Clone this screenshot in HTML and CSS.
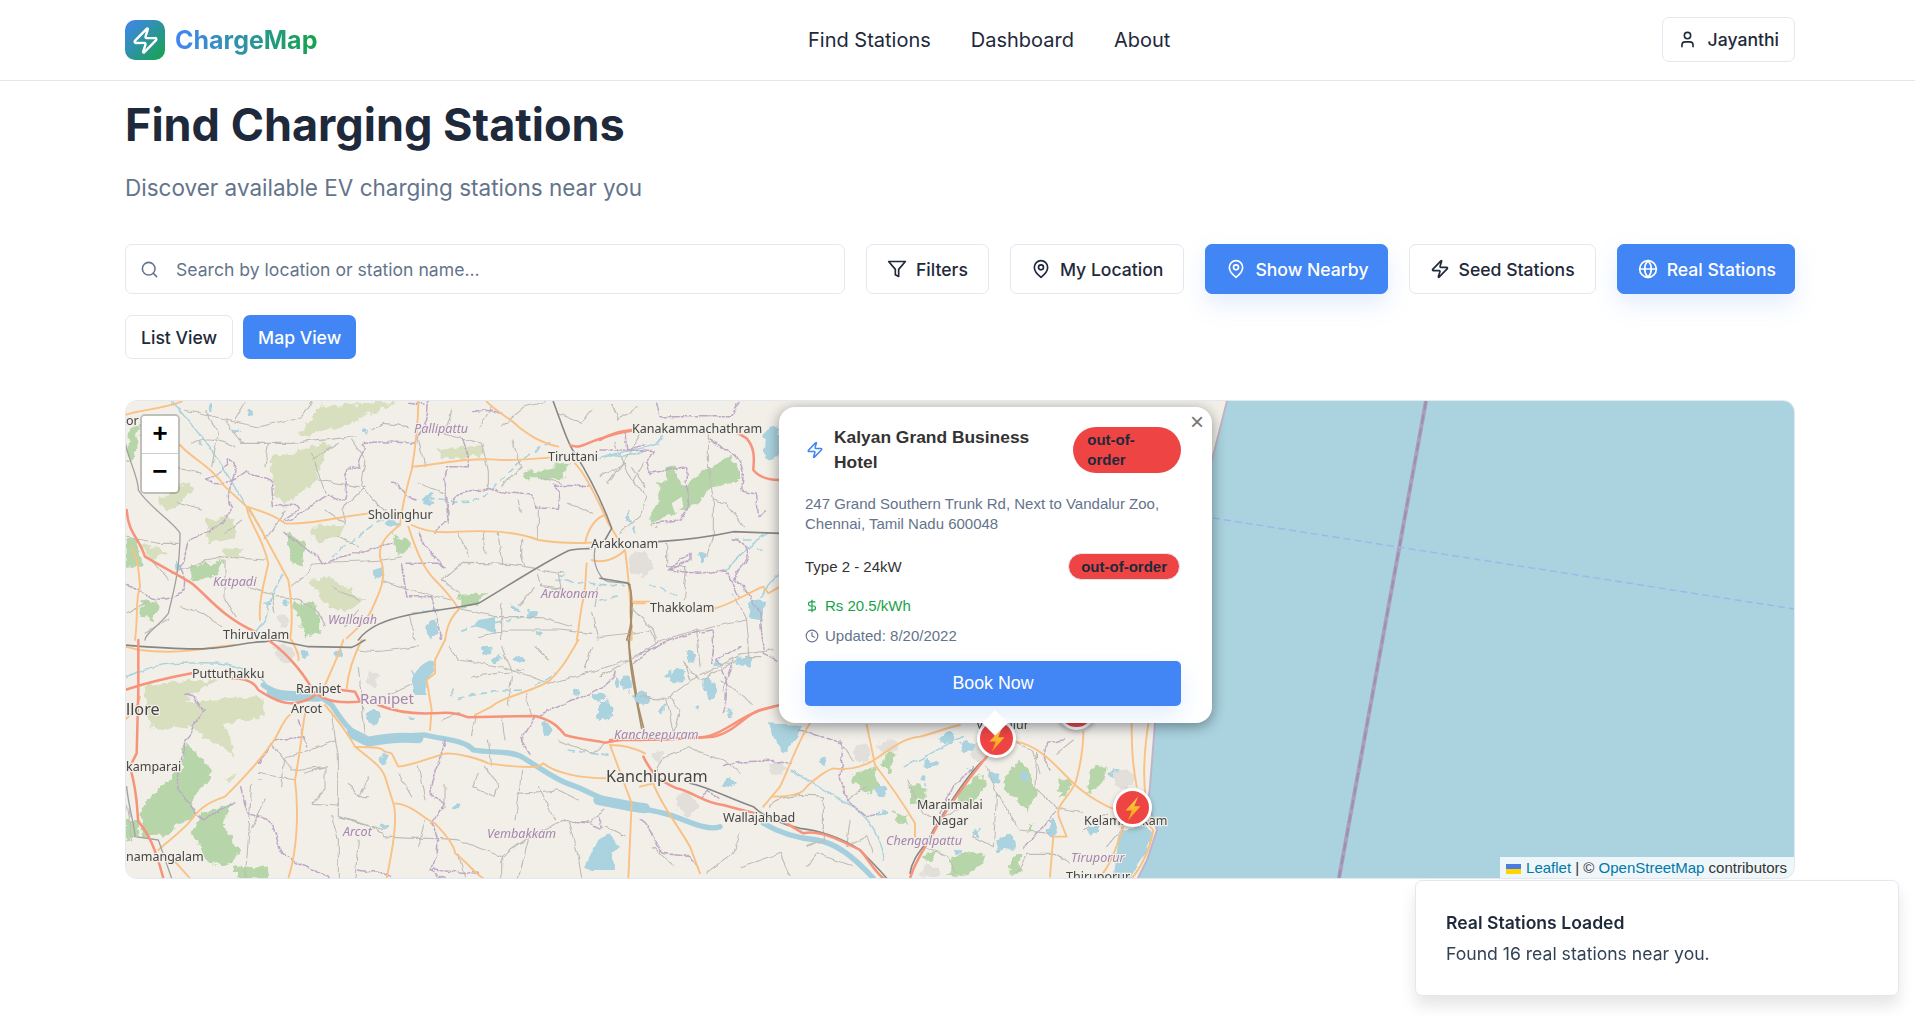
FILE: index.html
```html
<!DOCTYPE html>
<html lang="en">
<head>
<meta charset="utf-8">
<title>ChargeMap</title>
<link rel="stylesheet" href="styles.css">
</head>
<body>
<header class="topbar">
  <a class="brand">
    <span class="brand-mark"><svg class="ic ic-24" viewBox="0 0 24 24"><path d="M4 14a1 1 0 0 1-.78-1.63l9.9-10.2a.5.5 0 0 1 .86.46l-1.92 6.02A1 1 0 0 0 13 10h7a1 1 0 0 1 .78 1.63l-9.9 10.2a.5.5 0 0 1-.86-.46l1.92-6.02A1 1 0 0 0 11 14z"/></svg></span>
    <span class="brand-name">ChargeMap</span>
  </a>
  <nav class="nav"><a>Find Stations</a><a>Dashboard</a><a>About</a></nav>
  <button class="user-btn"><svg class="ic ic-19" viewBox="0 0 24 24"><path d="M19 21v-2a4 4 0 0 0-4-4H9a4 4 0 0 0-4 4v2"/><circle cx="12" cy="7" r="4"/></svg>Jayanthi</button>
</header>
<main class="page">
  <h1 class="title">Find Charging Stations</h1>
  <p class="subtitle">Discover available EV charging stations near you</p>
  <div class="toolbar">
    <label class="search"><svg class="ic ic-19" viewBox="0 0 24 24"><circle cx="11" cy="11" r="8"/><path d="m21 21-4.3-4.3"/></svg><span class="placeholder">Search by location or station name...</span></label>
    <button class="btn"><svg class="ic ic-20" viewBox="0 0 24 24"><polygon points="22 3 2 3 10 12.46 10 19 14 21 14 12.46 22 3"/></svg>Filters</button>
    <button class="btn"><svg class="ic ic-20" viewBox="0 0 24 24"><path d="M20 10c0 6-8 12-8 12s-8-6-8-12a8 8 0 0 1 16 0Z"/><circle cx="12" cy="10" r="3"/></svg>My Location</button>
    <button class="btn btn-primary"><svg class="ic ic-20" viewBox="0 0 24 24"><path d="M20 10c0 6-8 12-8 12s-8-6-8-12a8 8 0 0 1 16 0Z"/><circle cx="12" cy="10" r="3"/></svg>Show Nearby</button>
    <button class="btn"><svg class="ic ic-20" viewBox="0 0 24 24"><path d="M4 14a1 1 0 0 1-.78-1.63l9.9-10.2a.5.5 0 0 1 .86.46l-1.92 6.02A1 1 0 0 0 13 10h7a1 1 0 0 1 .78 1.63l-9.9 10.2a.5.5 0 0 1-.86-.46l1.92-6.02A1 1 0 0 0 11 14z"/></svg>Seed Stations</button>
    <button class="btn btn-primary"><svg class="ic ic-20" viewBox="0 0 24 24"><circle cx="12" cy="12" r="10"/><path d="M12 2a14.5 14.5 0 0 0 0 20 14.5 14.5 0 0 0 0-20"/><path d="M2 12h20"/></svg>Real Stations</button>
  </div>
  <div class="views">
    <button class="view">List View</button>
    <button class="view view-on">Map View</button>
  </div>
  <section class="map">
    <svg class="tiles" viewBox="126 401 1668 477" preserveAspectRatio="none">
      <defs>
        <filter id="rough" x="-10%" y="-10%" width="120%" height="120%"><feTurbulence type="fractalNoise" baseFrequency=".035" numOctaves="3" seed="4"/><feDisplacementMap in="SourceGraphic" scale="34" xChannelSelector="R" yChannelSelector="G"/></filter>
        <filter id="wiggle" x="-5%" y="-5%" width="110%" height="110%"><feTurbulence type="fractalNoise" baseFrequency=".03" numOctaves="2" seed="9"/><feDisplacementMap in="SourceGraphic" scale="16" xChannelSelector="R" yChannelSelector="G"/></filter>
        <linearGradient id="bolt" x1="0" y1="0" x2="0" y2="1"><stop offset="0" stop-color="#fcd34d"/><stop offset="1" stop-color="#f59e0b"/></linearGradient>
      </defs>
      <rect class="sea" x="126" y="401" width="1668" height="477"/>
      <path class="land" d="M126 401H1227L1212 460L1180 600L1155 723L1150 787L1148 803L1157 830L1147 860L1138 878H126Z"/>
      <path class="coast" d="M1227 401L1212 460L1180 600L1155 723L1150 787L1148 803L1157 830L1147 860L1138 878"/>
      <path class="eez" d="M1426 401L1339 878"/>
      <path class="eez-d" d="M1426 401L1339 878"/>
      <path class="maritime" d="M1213 518L1794 609"/>

      <!-- north-west sheet -->
      <g transform="translate(125 400) scale(.33333)">
        <path class="sc" d="M440 170L610 130 590 190 570 250 480 310 450 290Z M520 110L580 20 810 5 700 60 620 90Z M940 150L1070 135 1060 170 950 178Z M560 380L660 375 640 410 570 425Z M550 540L620 535 720 600 660 640 600 610Z M240 360L330 350 335 410 250 430Z M295 450L350 440 340 480 300 475Z M50 430L130 460 80 480Z M100 300L180 250 210 265 130 340Z"/>
        <path class="fo" d="M1190 225L1340 185 1310 235 1200 235Z M500 605L570 610 590 700 540 715 520 650Z M1000 585L1080 580 1060 615 1000 620Z M5 100L45 60 30 170 5 190Z M5 410L40 420 50 500 5 500Z M200 500L290 480 270 530 190 540Z M480 400L540 420 530 500 510 490Z M800 400L860 430 820 470Z M50 600L110 610 80 660 50 650Z"/>
        <path class="wa" d="M1060 660L1110 650 1110 700 1050 680Z M745 510L775 500 775 530 750 535Z"/>
        <path class="st" d="M140 5C200 70 280 170 340 280 380 340 400 370 420 410M475 520C450 570 430 600 425 650 410 680 400 690 390 700M1450 165C1500 175 1540 160 1560 150"/>
        <path class="dash" d="M620 470C680 420 730 390 780 350M910 290C960 300 1020 310 1050 300 1100 280 1130 240 1180 190 1210 170 1250 130 1290 125M860 640L940 630M1010 690C1060 670 1140 670 1220 640M1290 540L1500 560M1510 350L1530 400"/>
        <g class="blobs"><ellipse cx="800" cy="370" rx="20" ry="10"/><ellipse cx="912" cy="300" rx="8" ry="20"/><ellipse cx="920" cy="690" rx="15" ry="25"/><ellipse cx="258" cy="20" rx="8" ry="10"/><ellipse cx="370" cy="32" rx="8" ry="6"/><ellipse cx="720" cy="95" rx="12" ry="7"/><ellipse cx="335" cy="90" rx="8" ry="6"/><ellipse cx="1220" cy="645" rx="14" ry="12"/><ellipse cx="1170" cy="625" rx="10" ry="8"/><ellipse cx="1240" cy="700" rx="10" ry="8"/><ellipse cx="480" cy="610" rx="8" ry="12"/><ellipse cx="155" cy="495" rx="8" ry="10"/><ellipse cx="430" cy="610" rx="12" ry="6"/><ellipse cx="225" cy="130" rx="8" ry="5"/><ellipse cx="1505" cy="350" rx="5" ry="14"/><ellipse cx="1310" cy="525" rx="8" ry="4"/></g>
        <ellipse class="urban" cx="475" cy="660" rx="20" ry="22"/>
        <path class="mi" d="M180 30L300 60 400 80 530 50 560 5M300 60L350 130 500 130 690 110M200 130C250 100 300 130 330 140M680 120L720 180 710 260 780 330M740 90L780 70 850 80M880 85L1010 115 1070 130 1090 210 1090 260M1130 80L1200 20 1260 5M1300 40L1370 70 1400 30M560 490C620 480 760 490 830 470M560 490L550 520 500 560M420 420C450 380 470 340 480 330M1240 330L1240 420M1190 420L1190 470 1200 500 1320 520M1010 490C1080 490 1170 490 1200 500M1010 490L950 540 1000 580M1075 395L1080 460M770 540L850 570 980 600M1000 625L1110 650 1240 650 1340 680M1130 610L1130 720M1240 520L1250 560 1330 570M1300 520L1310 580M1450 250L1500 180 1550 100M1520 200L1560 260M140 520L200 500 280 470 420 480M0 410L100 430 160 430M300 480L300 600 330 650M170 620L230 640 290 680M0 640L60 610M450 590C520 590 590 620 600 680M1060 710L1150 690 1300 690 1400 700M1400 640L1420 720M850 650L870 720M240 30L280 100 260 200M430 130L420 200M560 160L600 280M720 260L650 330 660 370M580 240L700 260M360 10L330 60M640 130L560 180M1180 300L1190 340M1330 310L1400 340M1460 10L1480 60 1540 20M1470 130L1530 260M160 310L230 330M130 200L230 220M900 200L880 120M1100 20L1060 90M1160 120L1190 200 1130 260M960 100L980 30M1240 230L1310 250M880 250L960 280 970 370M1000 400L1030 470M1120 400L1130 490M1230 560L1180 620M1420 560L1410 620M620 560L700 600M700 630L660 680M370 560L440 580 450 640M70 470L130 540M60 700L130 660M350 360L300 400M640 410L700 440M600 330L660 370"/>
        <path class="bd" d="M0 555L40 570C90 610 130 600 170 580 190 540 170 520 165 500 190 480 170 430 210 410 270 390 310 370 320 320 290 280 340 230 330 185L310 180C300 210 270 230 245 240 280 260 340 240 365 215 400 240 430 220 440 250L445 320C500 315 520 310 520 330 500 350 470 355 480 365 530 350 560 310 610 285 640 300 665 320 665 280 660 240 650 210 680 200L705 205C690 170 725 160 720 140 700 130 740 120 870 130L905 60 910 5M850 10L900 15M970 210L955 240 965 290 970 360C940 370 935 400 930 400M980 310C990 270 1040 280 1090 265 1130 280 1180 280 1220 285L1230 325 1300 325 1305 280 1285 255 1395 260M830 495L845 590 920 590 945 690 950 720M840 490H940L960 500 900 440 880 400M480 400C520 440 570 450 590 490 650 470 720 450 800 430M1040 35C1080 30 1100 30 1130 40M1010 115L1030 170V200H960M1500 95L1505 150 1560 135M800 250C820 245 830 280 870 300"/>
        <path class="ro" d="M0 45C40 30 100 30 170 5M165 135C200 175 260 200 300 260L365 320C400 330 450 345 480 370 540 375 620 355 730 340M365 320C370 370 410 400 430 490 420 540 400 600 405 660M370 320L420 410 490 540C500 600 505 660 495 720M880 0C880 80 870 150 860 210 840 280 830 330 825 375M865 200C930 195 1000 175 1100 178 1170 185 1230 175 1280 172M1085 5C1120 40 1150 50 1180 80 1220 110 1250 130 1300 140M1350 190C1380 220 1410 280 1450 370L1500 450C1510 520 1520 640 1520 720M1380 430C1390 380 1420 345 1445 345M825 375C790 400 760 430 765 470 790 540 760 580 740 630 720 670 690 690 665 715M850 380C870 440 890 500 930 540 970 580 1000 620 1000 630 970 660 965 690 960 720M860 375C900 395 950 400 1000 395 1100 390 1180 395 1240 420 1300 430 1350 430 1400 428M1400 480C1430 490 1470 480 1500 450M1385 490C1380 540 1385 560 1370 620 1360 680 1360 700 1355 720M1520 610H1560M30 720C40 650 30 600 45 560 40 490 35 470 20 440"/>
        <path class="rl-l" d="M0 125C10 180 40 230 40 270 70 320 150 370 165 400 165 500 150 560 130 640 100 680 60 700 60 720M1410 445C1400 500 1430 540 1450 545L1510 550"/>
        <path class="rl" d="M700 720C730 680 780 660 850 645 920 630 1000 625 1060 610 1130 570 1250 490 1330 452 1350 445 1380 447 1400 445M1285 5C1310 70 1330 140 1350 160 1400 240 1440 330 1460 385L1440 420"/>
        <path class="rb" d="M1510 550C1530 600 1520 680 1505 720"/>
        <path class="tr" d="M5 330C10 400 40 410 60 470 110 500 170 530 200 550 250 590 290 650 390 695M1335 135C1365 150 1390 125 1430 115 1470 100 1500 95 1520 92"/>
      </g>

      <!-- south-west sheet -->
      <g transform="translate(125 640) scale(.33333)">
        <path class="sc" d="M60 140L190 120 270 120 180 180 240 180 420 170 410 230 300 250 330 350 260 300 200 260 90 270 60 200Z M300 410L340 400 310 430Z"/>
        <path class="fo" d="M180 310L240 370 260 410 200 470 210 520 120 590 50 590 50 500 110 440 170 380Z M230 520L320 490 290 560 350 630 330 660 250 680 240 640 200 580Z M330 680H430V715H330Z M0 540L40 540 40 590 0 600Z"/>
        <path class="wa-s" d="M415 135C450 160 480 165 520 160 560 150 590 170 620 195 650 240 680 290 740 305 790 295 850 285 900 285 960 300 1020 300 1045 330 1100 340 1150 330 1190 350 1240 380 1290 420 1340 435 1400 455 1430 490 1560 505"/>
        <path class="wa-w" d="M440 160C470 170 530 170 580 170M730 305C780 295 830 290 880 295M1420 480C1470 490 1520 500 1560 505M680 280L720 300"/>
        <path class="st" d="M0 110C40 100 80 70 170 70 260 65 350 60 420 130"/>
        <path class="wa" d="M860 120C870 90 900 60 925 60L930 90 905 120V165H870ZM1380 680L1400 640 1420 600 1450 580 1485 620 1460 640 1470 690 1400 690Z"/>
        <g class="blobs"><ellipse cx="745" cy="235" rx="20" ry="20"/><ellipse cx="1180" cy="55" rx="18" ry="14"/><ellipse cx="1115" cy="60" rx="8" ry="15"/><ellipse cx="1265" cy="265" rx="12" ry="25"/><ellipse cx="1440" cy="215" rx="22" ry="25"/><ellipse cx="1505" cy="130" rx="15" ry="25"/><ellipse cx="1475" cy="130" rx="10" ry="15"/><ellipse cx="855" cy="238" rx="12" ry="6"/><ellipse cx="775" cy="360" rx="8" ry="18"/><ellipse cx="1425" cy="170" rx="25" ry="15"/><ellipse cx="640" cy="40" rx="8" ry="14"/><ellipse cx="540" cy="45" rx="8" ry="10"/><ellipse cx="1000" cy="495" rx="12" ry="7"/><ellipse cx="775" cy="560" rx="8" ry="10"/><ellipse cx="1085" cy="30" rx="8" ry="10"/><ellipse cx="1355" cy="158" rx="7" ry="12"/><ellipse cx="410" cy="422" rx="8" ry="3"/></g>
        <ellipse class="urban" cx="745" cy="115" rx="16" ry="24"/>
        <ellipse class="urban" cx="480" cy="40" rx="30" ry="24"/>
        <path class="dash" d="M985 150L975 170M1000 175C1060 160 1130 150 1210 150 1240 130 1270 120 1290 100M1330 330L1460 350M860 90L880 135"/>
        <path class="mi" d="M620 230L640 350V530C700 540 750 560 780 590 850 600 950 590 1000 600L1130 650 1200 600 1310 545H1400M440 310L500 390 600 380V450L560 490 640 495M400 400L510 420M630 300L530 340 480 350 470 440M670 430L700 470H730M640 530L780 570M1000 60C1100 70 1170 90 1270 130 1350 110 1400 100 1510 60M1040 110L1200 90M1050 225L1040 290M1130 230L1140 300M1205 160L1220 230M1190 390L1180 480 1170 540M1180 460L1300 450 1360 480M1060 400L1040 440 1110 470 1120 430 1075 380M960 430V500M380 430L370 600 360 715M620 530L640 600V715M700 600L690 715M1330 545L1360 650 1370 715M1000 640L1020 715M1130 650V715M1210 600L1180 715M5 500L20 600M700 30C760 40 800 30 880 20M700 80L720 280M1130 20L1160 100 1150 200M1400 540L1440 510M420 480L380 560M880 380L900 480M900 540L880 620M1240 440L1290 540M1440 560L1500 590M1300 300L1400 340 1440 310M1100 380L1090 300M820 400L860 470M730 410L700 470M540 400L600 380M950 240L1000 220M800 160L860 130M970 20L1000 60M1230 20L1270 60M1400 20L1380 90"/>
        <path class="bd" d="M180 160C230 170 200 190 240 210 200 240 210 270 180 300 170 370 150 400 160 450 200 490 210 530 240 540M240 540C270 510 320 500 330 490M350 440C360 480 350 520 400 530 450 540 450 590 470 640 530 680 570 690 620 715M540 290L450 300 400 370M520 240L545 320M960 300C950 360 920 400 915 460L960 490 920 550C950 600 940 660 910 690L960 715M1470 90C1470 140 1400 160 1300 200L1230 230 1190 300 1215 340M1420 530C1450 600 1420 540 1340 545M700 690C740 700 780 690 800 715M920 690L1060 700"/>
        <path class="ro" d="M0 20L45 30C120 40 200 35 280 20L330 15M655 0C640 50 610 110 585 170M710 0C690 40 670 90 665 145M960 0L930 60V100L905 120 920 210 915 270M1360 0C1330 50 1310 90 1270 125 1210 160 1130 170 1100 200L1050 225M500 220C470 240 460 290 440 310 400 370 340 430 300 470 240 490 220 510 190 550 150 590 110 620 100 630M540 220C530 280 525 340 510 420 520 500 520 620 490 715M600 195C640 240 680 300 690 320 740 360 770 380 780 410L805 490C820 540 800 640 785 715M805 490C860 490 900 540 930 550 960 580 990 620 990 640 1030 670 1050 700 1075 715M690 320C730 325 760 315 780 335L800 340 820 380C870 375 920 350 965 340 1000 340 1060 355 1090 370 1130 375 1180 385 1240 380L1255 370C1290 400 1370 415 1450 415M1455 315L1520 490 1510 715M1560 340C1530 325 1490 315 1455 315M150 665L195 715M500 0C515 30 525 50 520 60M0 240C20 220 40 200 45 170"/>
        <path class="rl" d="M0 15C60 20 200 30 250 25 300 25 370 5 420 5L450 0 550 20 680 22C700 15 710 5 720 0"/>
        <path class="rl-l" d="M5 440C10 500 30 560 30 590L100 600 140 715"/>
        <path class="rb" d="M1510 0C1515 50 1530 130 1540 200L1560 280"/>
        <path class="tr" d="M0 150C60 130 120 115 200 100M320 115C370 115 390 130 400 150 430 170 470 190 500 190 530 190 560 175 570 165 550 120 500 50 430 0M580 165C600 180 640 190 700 185M650 150L690 155 705 185M760 195C810 215 870 222 920 220 960 218 990 215 1030 232 1100 230 1180 228 1230 228 1280 240 1300 260 1320 285 1370 300 1410 300 1440 308 1480 300 1520 295 1560 295M40 0V150L35 340 15 380C40 470 35 510 40 545 70 580 90 620 115 715"/>
      </g>

      <!-- north-east sheet, beside the popup -->
      <g transform="translate(600 400) scale(.33333)">
        <path class="fo" d="M175 250L195 245 200 200H230L235 245 260 260 300 220 340 200 390 170 410 190 415 240 340 260 290 310 250 330 230 340 190 350 155 380 150 350 175 310Z"/>
        <path class="land" d="M215 310L245 290 250 320 225 340Z"/>
        <g class="blobs"><ellipse cx="515" cy="130" rx="25" ry="55"/><ellipse cx="470" cy="630" rx="25" ry="35"/><ellipse cx="15" cy="930" rx="20" ry="25"/><ellipse cx="75" cy="850" rx="10" ry="20"/><ellipse cx="125" cy="895" rx="20" ry="15"/><ellipse cx="235" cy="830" rx="20" ry="20"/><ellipse cx="205" cy="825" rx="12" ry="12"/><ellipse cx="278" cy="765" rx="10" ry="15"/><ellipse cx="305" cy="470" rx="10" ry="14"/><ellipse cx="320" cy="855" rx="10" ry="20"/><ellipse cx="445" cy="785" rx="15" ry="10"/><ellipse cx="355" cy="795" rx="15" ry="10"/><ellipse cx="390" cy="940" rx="8" ry="12"/></g>
        <ellipse class="urban" cx="120" cy="490" rx="35" ry="35"/>
        <path class="st" d="M0 175C60 150 130 150 175 130L190 110M380 510C420 460 460 430 500 400M480 590C510 550 525 530 540 520"/>
        <path class="dash" d="M150 550L230 590M0 600L60 590M400 420H450M470 450H500"/>
        <path class="mi" d="M0 710C80 700 120 700 150 690L170 730C230 700 300 690 440 660M325 100V200L340 300V400L320 470M340 300L380 310 430 380M100 240L130 190M100 240L140 290 120 350 60 400M200 430V500H260L250 600M250 790L300 840 380 800 440 770H480M0 830C50 800 110 770 170 730M210 890L240 930 220 1000M90 620L160 690 170 720M290 690L300 800M0 230L80 190M400 580L440 660 450 770"/>
        <path class="bd" d="M0 150H90L160 155 140 190 150 220 260 200 265 320 240 360 160 370M330 120C380 150 420 160 430 220L425 270 470 280 475 350 500 330M400 420C450 430 450 460 430 490L400 540 430 560 480 640 490 760 530 780M205 510L270 460V480L210 510 290 520 380 510 400 560 420 590M170 10L180 50H390L420 10M100 790C180 720 260 700 340 690V750L335 790M370 870L400 780"/>
        <path class="ro" d="M95 605H150M345 625C400 610 440 580 490 560L505 580 540 560M250 625C280 640 320 640 345 625"/>
        <path class="rl" d="M175 425C250 420 330 410 400 395L540 400M0 535L80 548 90 555"/>
        <path class="rb" d="M90 560C100 600 85 630 95 680 80 720 90 790 100 850L125 985"/>
        <path class="tr" d="M0 120C30 100 60 95 95 90M440 115C470 150 460 190 460 210 480 235 510 240 540 240M440 115L415 100M30 1020C150 1020 280 1015 340 1010 400 1000 440 940 480 930 500 925 520 920 540 915"/>
      </g>

      <!-- south-east sheet -->
      <g transform="translate(640 640) scale(.33333)">
        <path class="fo" d="M640 400L700 385 720 440 690 460 640 420Z M810 430L860 440 850 480 810 490Z M1120 370L1140 360 1170 400 1190 460 1160 520 1120 470 1090 440Z M1020 400L1040 430 1000 490 960 500 950 470Z M760 520L800 530V545H765Z M1255 420L1290 410 1300 440 1260 470Z M1360 380H1400L1380 440 1340 460Z M740 330L770 340 745 400 730 370Z M930 650L1000 640 1040 650 1000 700 920 710Z M1170 550L1190 540 1170 580Z M850 640L900 630 860 670Z M1120 640H1140L1145 700H1110Z"/>
        <path class="wa-s" d="M0 505C30 510 60 515 90 525 140 540 200 575 240 560M370 550C420 580 470 595 530 600 590 610 640 650 700 715"/>
        <path class="wa" d="M380 250C400 290 420 310 420 340 450 340 470 300 490 255Z"/>
        <g class="blobs"><ellipse cx="305" cy="65" rx="20" ry="15"/><ellipse cx="150" cy="45" rx="12" ry="18"/><ellipse cx="115" cy="110" rx="20" ry="18"/><ellipse cx="10" cy="175" rx="22" ry="20"/><ellipse cx="215" cy="150" rx="15" ry="25"/><ellipse cx="270" cy="430" rx="20" ry="15"/><ellipse cx="1100" cy="610" rx="25" ry="25"/><ellipse cx="1235" cy="565" rx="12" ry="25"/><ellipse cx="985" cy="320" rx="22" ry="18"/><ellipse cx="925" cy="295" rx="15" ry="20"/><ellipse cx="1065" cy="410" rx="18" ry="18"/><ellipse cx="1010" cy="580" rx="10" ry="15"/><ellipse cx="720" cy="450" rx="20" ry="12"/><ellipse cx="730" cy="520" rx="15" ry="10"/><ellipse cx="950" cy="635" rx="10" ry="8"/><ellipse cx="550" cy="360" rx="10" ry="12"/><ellipse cx="870" cy="370" rx="20" ry="8"/><ellipse cx="850" cy="420" rx="10" ry="8"/><ellipse cx="990" cy="395" rx="10" ry="8"/><ellipse cx="1150" cy="410" rx="12" ry="8"/><ellipse cx="1360" cy="570" rx="20" ry="12"/><ellipse cx="1425" cy="400" rx="20" ry="10"/><ellipse cx="70" cy="205" rx="7" ry="9"/><ellipse cx="175" cy="205" rx="8" ry="9"/></g>
        <g class="urbans"><ellipse cx="670" cy="340" rx="25" ry="30"/><ellipse cx="745" cy="315" rx="30" ry="20"/><ellipse cx="410" cy="385" rx="25" ry="20"/><ellipse cx="1450" cy="415" rx="30" ry="30"/><ellipse cx="140" cy="490" rx="30" ry="35"/><ellipse cx="1020" cy="340" rx="30" ry="25"/><ellipse cx="50" cy="350" rx="20" ry="20"/><ellipse cx="870" cy="695" rx="28" ry="18"/></g>
        <path class="st" d="M450 390C520 430 580 470 640 500 690 540 720 580 730 660M790 380C850 360 900 320 970 290"/>
        <path class="mi" d="M0 170L80 175 150 125 300 45 400 30M150 125L130 60M80 175L100 280M240 120L340 190M30 430L70 350 150 320 180 340 250 360 300 400M390 500C400 470 480 460 550 470V600L500 620M630 540L620 620 680 590 700 640M300 580L280 640 200 700M1040 380L1070 460 1140 570 1230 580M1070 460L1060 620 1000 590M960 500L900 540M1190 340L1185 440 1250 500 1330 520M1330 570L1400 520M1100 300L1180 330 1200 400M860 620L920 650 950 700M1130 700L1160 640H1240M1240 640L1290 670M500 680L530 640 640 680M300 680L420 640 450 710M600 300L640 360M800 420L850 520 900 540M620 480L680 440M40 620L100 680M1250 340L1300 300M1400 620L1450 560"/>
        <path class="bd" d="M250 220C260 180 270 120 230 60L300 20M0 40L50 20M480 270L610 310 600 410 620 480 680 530 720 520M250 380C300 360 380 360 450 370M0 540C40 560 40 620 70 640L150 650 170 680M240 480L200 450 190 470M1000 380L940 440 900 520M1250 510L1200 570 1150 630M1270 300L1220 310 1210 350 1230 390"/>
        <path class="ro" d="M510 250C470 310 450 380 420 440L370 500M400 470C460 470 490 460 500 440 520 420 560 390 580 385 640 395 690 370 710 355 760 320 790 295 840 290 880 280 930 260 960 255M680 255C690 300 700 350 705 375 740 420 790 490 825 550V590M0 440L40 430C60 490 110 550 150 620L180 700M1130 305C1200 320 1240 370 1290 420 1340 470 1400 500 1430 510M1330 275C1330 340 1310 430 1300 440 1280 480 1240 500 1260 540L1280 590H1240L1230 710"/>
        <path class="rl" d="M150 430C200 440 280 480 340 500 370 530 430 555 480 565 530 570 600 590 660 630 700 670 720 690 740 715M1025 365C990 400 940 470 880 570 860 620 820 640 810 700"/>
        <path class="tr" d="M0 300C60 295 120 300 180 292 250 290 300 220 400 200M10 350C30 390 50 420 110 445 160 455 190 490 250 495 300 510 330 515 350 520M440 550L490 580C530 570 580 590 660 630 680 650 700 690 730 715M1040 350C1000 400 950 460 890 560 860 620 830 650 810 715"/>
      </g>

      <!-- shore by the lagoon -->
      <g transform="translate(1000 690) scale(.33333)">
        <path class="wa" d="M360 420L440 410 455 430 430 500 385 565H340Z"/>
        <path class="ro" d="M395 100C395 200 400 230 410 290M445 100C430 200 425 290 450 410L460 420C450 480 420 540 390 570M370 410C350 470 330 530 300 560"/>
      </g>

      <g class="tl">
        <text x="632" y="433">Kanakammachathram</text><text x="548" y="461">Tiruttani</text><text x="368" y="519">Sholinghur</text><text x="591" y="548">Arakkonam</text><text x="650" y="612">Thakkolam</text><text x="223" y="639">Thiruvalam</text><text x="192" y="678">Puttuthakku</text><text x="296" y="693">Ranipet</text><text x="291" y="713">Arcot</text><text x="126" y="771">kamparai</text><text x="126" y="861">namangalam</text><text x="723" y="822">Wallajahbad</text><text x="917" y="809">Maraimalai</text><text x="932" y="825">Nagar</text><text x="1084" y="825">Kelambakkam</text><text x="1066" y="881">Thiruporur</text><text x="126" y="425">or</text><text x="976" y="729">Vandalur</text>
      </g>
      <g class="tl tl-lg"><text x="606" y="782">Kanchipuram</text><text x="126" y="715">llore</text></g>
      <g class="tp">
        <text x="414" y="433">Pallipattu</text><text x="213" y="586">Katpadi</text><text x="328" y="624">Wallajah</text><text x="541" y="598">Arakonam</text><text x="614" y="739">Kancheepuram</text><text x="343" y="836">Arcot</text><text x="487" y="838">Vembakkam</text><text x="886" y="845">Chengalpattu</text><text x="1071" y="862">Tiruporur</text>
      </g>
      <text class="tp-up" x="360" y="704">Ranipet</text>
    </svg>

    <div class="zoom"><a>+</a><a>−</a></div>

    <span class="pin pin-a"><svg viewBox="0 0 24 24"><polygon points="16 3 6 14 11 14 8 22 18 10.500 13 10.500"/></svg></span>
    <span class="pin pin-b"><svg viewBox="0 0 24 24"><polygon points="16 3 6 14 11 14 8 22 18 10.500 13 10.500"/></svg></span>
    <span class="pin pin-c"><svg viewBox="0 0 24 24"><polygon points="16 3 6 14 11 14 8 22 18 10.500 13 10.500"/></svg></span>

    <div class="popup">
      <a class="popup-close">×</a>
      <div class="popup-head">
        <svg class="ic ic-18 ic-blue" viewBox="0 0 24 24"><path d="M4 14a1 1 0 0 1-.78-1.63l9.9-10.2a.5.5 0 0 1 .86.46l-1.92 6.02A1 1 0 0 0 13 10h7a1 1 0 0 1 .78 1.63l-9.9 10.2a.5.5 0 0 1-.86-.46l1.92-6.02A1 1 0 0 0 11 14z"/></svg>
        <h3 class="popup-title">Kalyan Grand Business Hotel</h3>
        <span class="badge badge-wrap">out-of-order</span>
      </div>
      <p class="popup-addr">247 Grand Southern Trunk Rd, Next to Vandalur Zoo, Chennai, Tamil Nadu 600048</p>
      <div class="popup-row"><span>Type 2 - 24kW</span><span class="badge badge-line">out-of-order</span></div>
      <div class="price"><svg class="ic ic-14" viewBox="0 0 24 24"><line x1="12" y1="2" x2="12" y2="22"/><path d="M17 5H9.500a3.500 3.500 0 0 0 0 7h5a3.500 3.500 0 0 1 0 7H6"/></svg>Rs 20.5/kWh</div>
      <div class="updated"><svg class="ic ic-14" viewBox="0 0 24 24"><circle cx="12" cy="12" r="10"/><polyline points="12 6 12 12 16 14"/></svg>Updated: 8/20/2022</div>
      <button class="book">Book Now</button>
      <span class="popup-tip"></span>
    </div>

    <div class="attrib"><svg class="flag" viewBox="0 0 12 8"><rect width="12" height="4" fill="#4C7BE1"/><rect y="4" width="12" height="4" fill="#FFD500"/></svg><a>Leaflet</a> | © <a>OpenStreetMap</a> contributors</div>
  </section>
</main>
<aside class="toast">
  <strong>Real Stations Loaded</strong>
  <span>Found 16 real stations near you.</span>
</aside>
</body>
</html>
```
FILE: styles.css
```css
* { box-sizing: border-box; }
html, body { margin: 0; padding: 0; background: #fff; }
body { font-family: Inter, "Liberation Sans", sans-serif; color: #1e293b; height: 1016px; overflow: hidden; }
button { font: inherit; cursor: pointer; }
.ic { fill: none; stroke: currentColor; stroke-width: 2; stroke-linecap: round; stroke-linejoin: round; flex: none; display: block; }
.ic-24 { width: 29px; height: 29px; }
.ic-20 { width: 20px; height: 20px; }
.ic-19 { width: 19px; height: 19px; }
.ic-18 { width: 18px; height: 18px; }
.ic-14 { width: 14px; height: 14px; }
.ic-blue { color: #4285f4; }

.topbar { height: 81px; border-bottom: 1px solid #e2e8f0; padding: 0 120px 0 125px; display: flex; align-items: center; justify-content: space-between; position: relative; }
.brand { display: flex; align-items: center; gap: 10px; }
.brand-mark { width: 40px; height: 40px; border-radius: 10px; background: linear-gradient(135deg, #4285f4, #16a34a); color: #fff; display: flex; align-items: center; justify-content: center; }
.brand-name { font-size: 25px; font-weight: 700; background: linear-gradient(90deg, #4285f4, #16a34a); -webkit-background-clip: text; background-clip: text; color: transparent; }
.nav { display: flex; gap: 40px; font-size: 20px; font-weight: 400; color: #1e293b; position: absolute; left: 808px; }
.user-btn { height: 45px; margin-bottom: 2px; padding: 0 15px; display: flex; align-items: center; gap: 11px; background: #fff; border: 1px solid #e2e8f0; border-radius: 7px; font-size: 17.6px; font-weight: 500; color: #1e293b; }

.page { padding: 0 120px 0 125px; }
.title { margin: 18px 0 21px; font-size: 45px; line-height: 52px; font-weight: 700; color: #1e293b; }
.subtitle { margin: 0; font-size: 22.5px; line-height: 31px; color: #64748b; }
.toolbar { display: flex; gap: 21px; margin-top: 41px; height: 50px; }
.search { flex: 1; display: flex; align-items: center; gap: 17px; padding: 0 14px; border: 1px solid #e2e8f0; border-radius: 7px; color: #64748b; font-size: 17.6px; }
.btn { display: flex; align-items: center; gap: 9px; padding: 0 20px; height: 50px; background: #fff; border: 1px solid #e2e8f0; border-radius: 7px; font-size: 17.6px; font-weight: 500; color: #1e293b; white-space: nowrap; }
.btn-primary { padding: 0 18px 0 20px; background: #4285f4; border-color: #4285f4; color: #fff; box-shadow: 0 10px 25px rgba(66,133,244,.15); }
.views { display: flex; gap: 10px; margin-top: 21px; }
.view { height: 44px; padding: 0 15px; background: #fff; border: 1px solid #e2e8f0; border-radius: 7px; font-size: 17.6px; font-weight: 500; color: #1e293b; }
.view-on { background: #4285f4; border: 0; color: #fff; }

.map { position: relative; margin-top: 41px; height: 479px; border: 1px solid #e2e8f0; border-radius: 12px; overflow: hidden; }
.tiles { position: absolute; inset: 0; width: 100%; height: 100%; display: block; filter: blur(.55px); }
.sea { fill: #aad3df; }
.land { fill: #f2efe9; }
.coast { fill: none; stroke: #bfb4c8; stroke-width: 2; }
.eez { fill: none; stroke: #ab9fbc; stroke-width: 4; }
.eez-d { fill: none; stroke: #9d8fb3; stroke-width: 2; stroke-dasharray: 9 5; }
.maritime { fill: none; stroke: #9fb6ea; stroke-width: 1.4; stroke-dasharray: 7 4; }
.fo { fill: #b6d5a8; filter: url(#rough); }
.sc { fill: #d7dfbe; filter: url(#rough); }
.wa { fill: #aad3df; filter: url(#wiggle); }
.blobs { fill: #aad3df; filter: url(#rough); }
.urban, .urbans { fill: #e2dfda; filter: url(#rough); }
.wa-s, .wa-w, .st, .dash, .mi, .bd, .ro, .tr, .rl, .rl-l, .rb { fill: none; stroke-linecap: round; stroke-linejoin: round; }
.wa-s { stroke: #a5cfdd; stroke-width: 16; }
.wa-w { stroke: #a5cfdd; stroke-width: 30; }
.st { stroke: #aad3df; stroke-width: 4.500; filter: url(#wiggle); }
.dash { stroke: #aad3df; stroke-width: 5; stroke-dasharray: 18 16; filter: url(#wiggle); }
.mi { stroke: #bebcb7; stroke-width: 3.300; filter: url(#wiggle); }
.bd { stroke: #bda8c5; stroke-width: 4.500; stroke-dasharray: 22 6 6 6; filter: url(#wiggle); }
.ro { stroke: #f9c183; stroke-width: 5.700; }
.tr { stroke: #f6937a; stroke-width: 7.500; }
.rl { stroke: #868686; stroke-width: 4.800; }
.rl-l { stroke: #a0a0a0; stroke-width: 3.900; }
.rb { stroke: #a88d68; stroke-width: 5; }
.tl text { font-family: "Noto Sans", sans-serif; font-size: 12.5px; fill: #454545; stroke: #f2efe9; stroke-width: 2.500; paint-order: stroke; }
.tl-lg text { font-size: 16.2px; }
.tp text { font-family: "Noto Sans", sans-serif; font-size: 12.6px; font-style: italic; fill: #a585ad; stroke: #f2efe9; stroke-width: 2; paint-order: stroke; }
.tp-up { font-family: "Noto Sans", sans-serif; font-size: 15px; fill: #a585ad; stroke: #f2efe9; stroke-width: 2; paint-order: stroke; }

.zoom { position: absolute; left: 14px; top: 13px; width: 40px; border: 2px solid rgba(0,0,0,.2); border-radius: 5px; background-clip: padding-box; display: flex; flex-direction: column; }
.zoom a { height: 38px; background: #fff; display: flex; align-items: center; justify-content: center; font-family: "Liberation Mono", monospace; font-size: 26px; font-weight: 700; color: #000; }
.zoom a:first-child { border-bottom: 1px solid #ccc; border-radius: 3px 3px 0 0; }
.zoom a:last-child { border-radius: 0 0 3px 3px; }

.pin { position: absolute; width: 39px; height: 39px; border-radius: 50%; background: #ef4444; border: 3px solid #fff; box-shadow: 0 2px 5px rgba(0,0,0,.3); display: flex; align-items: center; justify-content: center; }
.pin svg { width: 30px; height: 30px; fill: url(#bolt); }
.pin-a { left: 851px; top: 318px; }
.pin-b { left: 931px; top: 290px; }
.pin-c { left: 987px; top: 387px; }

.popup { position: absolute; left: 653px; top: 6px; width: 433px; height: 316px; background: #fff; border-radius: 16px; padding: 18px 31px 0 26px; box-shadow: 0 3px 14px rgba(0,0,0,.4); font-family: "Liberation Sans", Arial, sans-serif; color: #333; }
.popup-close { position: absolute; top: 4px; right: 4px; width: 22px; height: 22px; font-size: 24px; line-height: 22px; text-align: center; color: #757575; }
.popup-head { display: flex; align-items: center; }
.popup-head .ic { margin-right: 10px; margin-left: 1px; }
.popup-title { margin: 0; width: 240px; font-size: 17.4px; line-height: 25px; font-weight: 700; color: #333; }
.badge { background: #ef4444; color: #1e293b; font-size: 15px; font-weight: 700; border-radius: 999px; }
.badge-wrap { width: 108px; padding: 3px 14px; line-height: 20px; }
.badge-line { height: 27px; line-height: 25px; padding: 0 12px; border: 1px solid #e2e8f0; margin-right: 1px; }
.popup-addr { margin: 19px 0 0; font-size: 15px; line-height: 20px; color: #64748b; }
.popup-row { display: flex; align-items: center; justify-content: space-between; margin-top: 19px; font-size: 15px; color: #333; }
.price, .updated { display: flex; align-items: center; gap: 6px; font-size: 15px; line-height: 20px; }
.price { margin-top: 16px; color: #16a34a; }
.updated { margin-top: 10px; color: #64748b; }
.book { display: block; width: 100%; height: 45px; margin-top: 15px; background: #4285f4; color: #fff; border: 0; border-radius: 5px; font-family: "Liberation Sans", Arial, sans-serif; font-size: 17.8px; box-shadow: 0 10px 25px rgba(66,133,244,.15); }
.popup-tip { position: absolute; left: 207px; top: 307px; width: 18px; height: 18px; background: #fff; transform: rotate(45deg); }

.attrib { position: absolute; right: 0; bottom: 0; height: 21px; padding: 1px 7px 0 6px; line-height: 20px; white-space: pre; background: rgba(255,255,255,.8); font-family: "Liberation Sans", Arial, sans-serif; font-size: 15px; color: #333; }
.attrib a { color: #0078a8; }
.flag { display: inline-block; width: 15px; height: 10px; margin-right: 5px; vertical-align: -1px; }

.toast { position: fixed; left: 1415px; top: 880px; width: 484px; height: 116px; padding: 30px 30px 0; background: #fff; border: 1px solid #e2e8f0; border-radius: 7px; box-shadow: 0 10px 15px rgba(0,0,0,.1); display: flex; flex-direction: column; gap: 7px; font-size: 17.6px; color: #1e293b; }
.toast strong { font-weight: 600; line-height: 24px; }
.toast span { line-height: 24px; color: #334155; }
```
